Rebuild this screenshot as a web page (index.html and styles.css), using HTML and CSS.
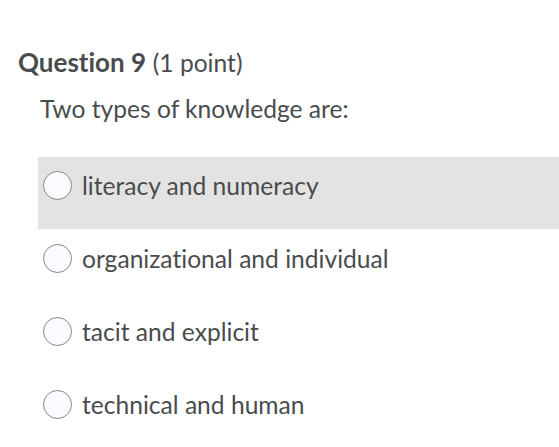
FILE: index.html
```html
<!DOCTYPE html>
<html>
<head>
<meta charset="utf-8">
<link rel="stylesheet" href="styles.css">
</head>
<body>
<div class="question">
  <h2 class="q-title"><strong>Question 9</strong> <span class="pts">(1 point)</span></h2>
  <div class="q-body">
    <p class="q-text">Two types of knowledge are:</p>
    <ul class="options">
      <li class="option hover"><span class="radio"></span><span class="label">literacy and numeracy</span></li>
      <li class="option"><span class="radio"></span><span class="label">organizational and individual</span></li>
      <li class="option"><span class="radio"></span><span class="label">tacit and explicit</span></li>
      <li class="option"><span class="radio"></span><span class="label">technical and human</span></li>
    </ul>
  </div>
</div>
</body>
</html>
```
FILE: styles.css
```css
html, body {
  margin: 0;
  padding: 0;
  background: #ffffff;
}
body {
  font-family: Lato, "Liberation Sans", sans-serif;
  color: #494c4e;
  font-variant-ligatures: none;
}
.question {
  padding: 46px 0 0 18px;
}
.q-title {
  margin: 0;
  font-size: 26px;
  font-weight: 400;
  line-height: 32px;
}
.q-title strong {
  font-weight: 700;
}
.pts {
  font-size: 24.6px;
}
.q-body {
  padding-left: 20px;
}
.q-text {
  margin: 14px 0 0 2px;
  font-size: 24.6px;
  line-height: 32px;
}
.options {
  list-style: none;
  margin: 32px 0 0 0;
  padding: 0;
  display: flex;
  flex-direction: column;
  gap: 1px;
}
.option {
  box-sizing: border-box;
  display: flex;
  align-items: center;
  height: 72px;
  padding: 14px 0 29px 5px;
  gap: 10px;
  font-size: 24.6px;
}
.option.hover {
  background: #e3e3e3;
}
.radio {
  box-sizing: border-box;
  width: 29px;
  height: 29px;
  border: 1px solid #868686;
  border-radius: 50%;
  background: #f9fbff;
  flex: none;
}
```
